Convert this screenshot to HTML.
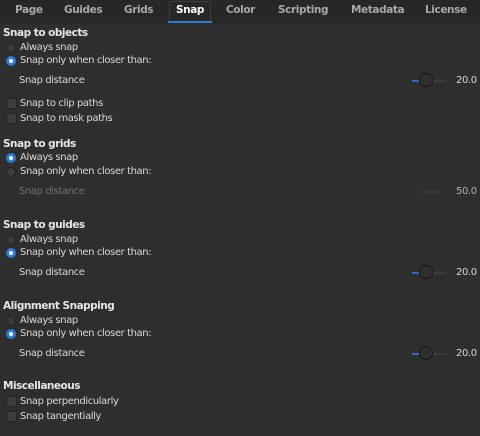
<!DOCTYPE html><html><head><style>
body{margin:0;width:480px;height:436px;background:#2e2e2e;font-family:"DejaVu Sans","Liberation Sans",sans-serif;font-size:10px;letter-spacing:-0.4px;color:#d8d8d8;position:relative;overflow:hidden}
.tabs{position:absolute;left:0;top:0;width:480px;height:23px;background:#272727}
.tab{position:absolute;top:4px;font-weight:bold;font-size:10.5px;color:#a8a8a8;letter-spacing:-0.4px}
.a{position:absolute;white-space:nowrap}
h{position:absolute;font-weight:bold;font-size:10.5px;color:#e6e6e6;left:3px;letter-spacing:-0.5px}
.r{position:absolute;left:6px;width:10px;height:10px;border-radius:50%;background:#3a3a3a;border:1px solid #222;box-sizing:border-box}
.r.on{background:#fff;border:3px solid #2a7ad8}
.c{position:absolute;left:6px;width:11px;height:11px;border-radius:2px;background:#3c3c3c;border:1px solid #262626;box-sizing:border-box}
.sl{position:absolute;left:412px;width:34px;height:2px;background:#3c3c3c}
.sl i{position:absolute;left:0;top:0;height:2px;width:8px;background:#2a6ac8}
.k{position:absolute;width:14px;height:14px;border-radius:50%;background:#2f2f2f;border:1px solid #151515;box-sizing:border-box}
.dim{color:#707070}
</style></head><body>
<div class="tabs">
<span class="tab" style="left:15px">Page</span>
<span class="tab" style="left:64px">Guides</span>
<span class="tab" style="left:124px">Grids</span>
<span class="tab" style="left:176px;color:#fff">Snap</span>
<div style="position:absolute;left:169px;top:1px;width:40px;height:21px;border:1px solid #3e3e3e;border-bottom:none;border-radius:3px 3px 0 0"></div>
<div style="position:absolute;left:168px;top:21px;width:44px;height:2px;background:#2a7ad8"></div>
<span class="tab" style="left:226px">Color</span>
<span class="tab" style="left:278px">Scripting</span>
<span class="tab" style="left:351px">Metadata</span>
<span class="tab" style="left:425px">License</span>
</div>

<h style="top:27px">Snap to objects</h>
<div class="r" style="top:43px"></div><span class="a" style="left:20px;top:42px">Always snap</span>
<div class="r on" style="top:56px"></div><span class="a" style="left:20px;top:55px">Snap only when closer than:</span>
<span class="a" style="left:19px;top:75px">Snap distance</span>
<div class="sl" style="top:80px"><i></i></div><div class="k" style="left:419px;top:73px"></div>
<span class="a" style="left:456px;top:75px">20.0</span>
<div class="c" style="top:98px"></div><span class="a" style="left:20px;top:98px">Snap to clip paths</span>
<div class="c" style="top:113px"></div><span class="a" style="left:20px;top:113px">Snap to mask paths</span>

<h style="top:138px">Snap to grids</h>
<div class="r on" style="top:153px"></div><span class="a" style="left:20px;top:152px">Always snap</span>
<div class="r" style="top:167px"></div><span class="a" style="left:20px;top:166px">Snap only when closer than:</span>
<span class="a dim" style="left:19px;top:186px">Snap distance</span>
<div class="sl" style="top:191px;left:420px;width:26px;background:#363636"></div><div class="k" style="left:440px;top:184px;background:#2e2e2e;border-color:#2a2a2a"></div>
<span class="a" style="left:456px;top:186px;color:#b0b0b0">50.0</span>

<h style="top:219px">Snap to guides</h>
<div class="r" style="top:235px"></div><span class="a" style="left:20px;top:234px">Always snap</span>
<div class="r on" style="top:248px"></div><span class="a" style="left:20px;top:247px">Snap only when closer than:</span>
<span class="a" style="left:19px;top:267px">Snap distance</span>
<div class="sl" style="top:272px"><i></i></div><div class="k" style="left:419px;top:265px"></div>
<span class="a" style="left:456px;top:267px">20.0</span>

<h style="top:300px">Alignment Snapping</h>
<div class="r" style="top:316px"></div><span class="a" style="left:20px;top:315px">Always snap</span>
<div class="r on" style="top:329px"></div><span class="a" style="left:20px;top:328px">Snap only when closer than:</span>
<span class="a" style="left:19px;top:348px">Snap distance</span>
<div class="sl" style="top:353px"><i></i></div><div class="k" style="left:419px;top:346px"></div>
<span class="a" style="left:456px;top:348px">20.0</span>

<h style="top:380px">Miscellaneous</h>
<div class="c" style="top:396px"></div><span class="a" style="left:20px;top:396px">Snap perpendicularly</span>
<div class="c" style="top:411px"></div><span class="a" style="left:20px;top:411px">Snap tangentially</span>
</body></html>
